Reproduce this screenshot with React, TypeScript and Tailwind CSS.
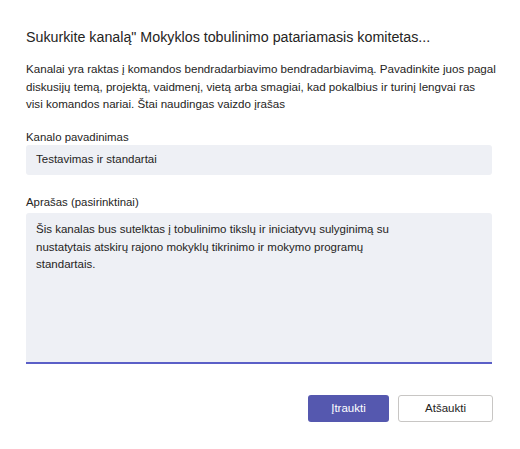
export default function App() {
  return (
    <div className="w-[520px] h-[449px] bg-white text-[#252423]" style={{ fontFamily: '"Liberation Sans", Arial, sans-serif' }}>
      <div className="pl-[26px] pr-[22px] pt-[27px]">
        <h1 className="text-[14.25px] leading-[20px] font-normal">Sukurkite kanalą" Mokyklos tobulinimo patariamasis komitetas...</h1>
        <p className="mt-[13px] text-[11.6px] leading-[17.5px]">
          Kanalai yra raktas į komandos bendradarbiavimo bendradarbiavimą. Pavadinkite juos pagal diskusijų temą, projektą, vaidmenį, vietą arba smagiai, kad pokalbius ir turinį lengvai ras
          <br />
          visi komandos nariai. Štai naudingas vaizdo įrašas
        </p>
        <div className="mt-[16.5px] text-[11.4px] leading-[16px]">Kanalo pavadinimas</div>
        <div className="h-[30px] w-[466px] rounded-[3px] bg-[#eef0f5] flex items-center px-[10px] text-[11.5px]">Testavimas ir standartai</div>
        <div className="mt-[19px] text-[11.4px] leading-[16px]">Aprašas (pasirinktinai)</div>
        <div className="mt-[3px] h-[151px] w-[466px] rounded-t-[3px] bg-[#eef0f5] border-b-2 border-[#5b5fc7] px-[10px] pt-[8px] text-[11.5px] leading-[17.5px]">
          <div className="w-[362px]">Šis kanalas bus sutelktas į tobulinimo tikslų ir iniciatyvų sulyginimą su nustatytais atskirų rajono mokyklų tikrinimo ir mokymo programų standartais.</div>
        </div>
        <div className="mt-[31px] flex justify-end gap-[9px] w-[467px]">
          <button className="h-[27px] w-[81px] rounded-[3px] bg-[#5558af] text-white text-[11.5px]">Įtraukti</button>
          <button className="h-[27px] w-[95px] rounded-[3px] bg-white border border-[#c8c6c4] text-[11.5px]">Atšaukti</button>
        </div>
      </div>
    </div>
  );
}
